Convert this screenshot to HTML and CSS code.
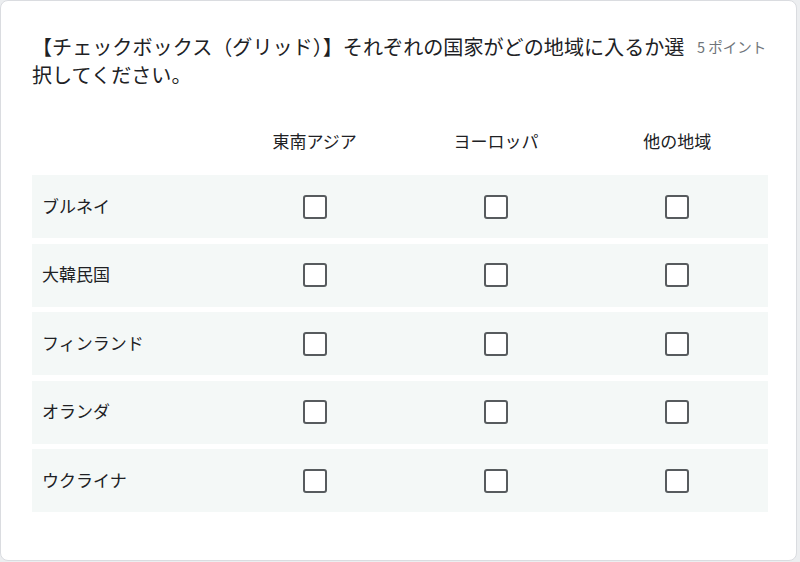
FILE: index.html
```html
<!DOCTYPE html>
<html lang="ja">
<head>
  <meta charset="UTF-8" />
  <meta name="viewport" content="width=device-width, initial-scale=1.0" />
  <title>チェックボックス（グリッド）</title>
  <link rel="stylesheet" href="styles.css">
</head>
<body>
  <div class="card">
    <div class="question">
      <div class="title">【チェックボックス（グリッド）】それぞれの国家がどの地域に入るか選択してください。</div>
      <div class="points">5 ポイント</div>
    </div>

    <div class="grid">
      <div class="grid-head">
        <span></span>
        <span class="col">東南アジア</span>
        <span class="col">ヨーロッパ</span>
        <span class="col">他の地域</span>
      </div>

      <div class="grid-row">
        <span class="label">ブルネイ</span>
        <span class="cell"><span class="box"></span></span>
        <span class="cell"><span class="box"></span></span>
        <span class="cell"><span class="box"></span></span>
      </div>

      <div class="grid-row">
        <span class="label">大韓民国</span>
        <span class="cell"><span class="box"></span></span>
        <span class="cell"><span class="box"></span></span>
        <span class="cell"><span class="box"></span></span>
      </div>

      <div class="grid-row">
        <span class="label">フィンランド</span>
        <span class="cell"><span class="box"></span></span>
        <span class="cell"><span class="box"></span></span>
        <span class="cell"><span class="box"></span></span>
      </div>

      <div class="grid-row">
        <span class="label">オランダ</span>
        <span class="cell"><span class="box"></span></span>
        <span class="cell"><span class="box"></span></span>
        <span class="cell"><span class="box"></span></span>
      </div>

      <div class="grid-row">
        <span class="label">ウクライナ</span>
        <span class="cell"><span class="box"></span></span>
        <span class="cell"><span class="box"></span></span>
        <span class="cell"><span class="box"></span></span>
      </div>
    </div>
  </div>
</body>
</html>
```

FILE: styles.css
```css
:root {
  --text-dark: #202124;
  --text-light: #70757a;
  --row-bg: #f4f8f7;
  --border: #dadce0;
  --box: #575b5e;
}

html, body {
  margin: 0;
  padding: 0;
}

body {
  font-family: "Noto Sans CJK JP", "Noto Sans", sans-serif;
  background-color: #eceef0;
  color: var(--text-dark);
}

.card {
  box-sizing: border-box;
  width: 797px;
  height: 561px;
  margin: 0 3px 1px 0;
  background-color: #ffffff;
  border: 1px solid var(--border);
  border-radius: 8px;
  padding: 32px 28px 0 31px;
}

.question {
  display: flex;
  align-items: flex-start;
}

.title {
  width: 657px;
  font-size: 20.1px;
  line-height: 28px;
}

.points {
  margin-left: 8px;
  font-size: 14.5px;
  line-height: 28px;
  color: var(--text-light);
  white-space: nowrap;
}

.grid {
  margin-top: 28px;
}

.grid-head,
.grid-row {
  display: grid;
  grid-template-columns: 192px 1fr 1fr 1fr;
  align-items: center;
}

.grid-head {
  height: 46px;
  margin-bottom: 12px;
  font-size: 17px;
}

.col {
  text-align: center;
}

.grid-row {
  height: 63px;
  margin-bottom: 5.5px;
  background-color: var(--row-bg);
  font-size: 17px;
}

.label {
  padding-left: 10px;
  margin-top: -3px;
}

.cell {
  display: flex;
  justify-content: center;
}

.box {
  box-sizing: border-box;
  width: 24px;
  height: 24px;
  border: 2px solid var(--box);
  border-radius: 3px;
  background-color: #ffffff;
}
```
